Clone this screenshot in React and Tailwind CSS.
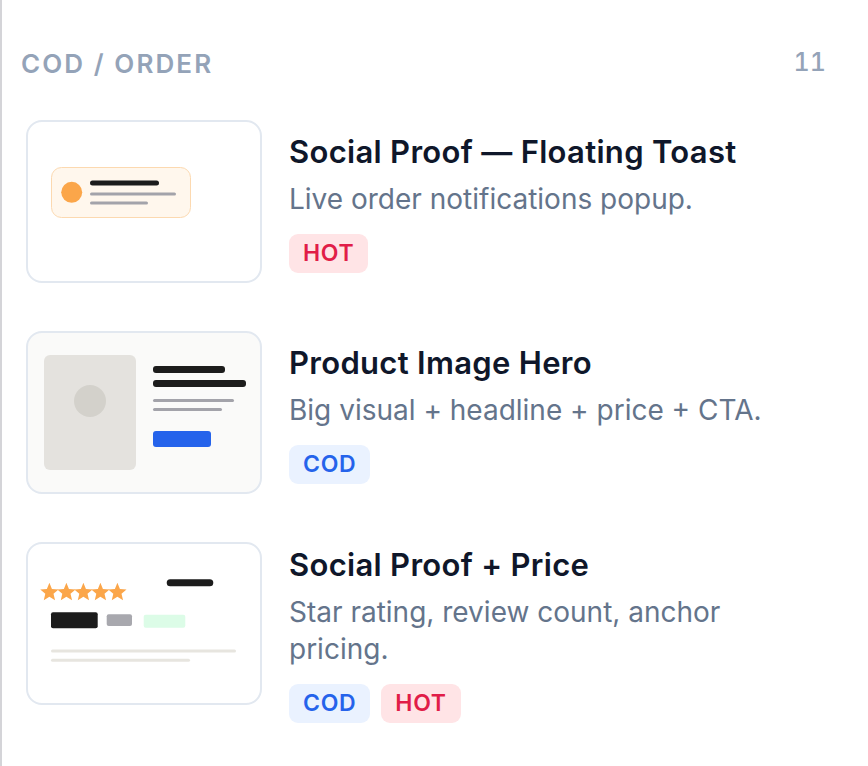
import React from 'react';

const starPoints = (cx, cy, R) => {
  const r = R * 0.45;
  const pts = [];
  for (let i = 0; i < 10; i++) {
    const rad = i % 2 === 0 ? R : r;
    const a = (Math.PI / 5) * i - Math.PI / 2;
    pts.push(`${(cx + rad * Math.cos(a)).toFixed(2)},${(cy + rad * Math.sin(a)).toFixed(2)}`);
  }
  return pts.join(' ');
};

const ToastThumb = () => (
  <svg width="232" height="159" viewBox="2 2 232 159">
    <rect x="25.5" y="47.5" width="139" height="50" rx="10" fill="#fff7ed" stroke="#fcd9b0" />
    <circle cx="45.7" cy="72.3" r="10.5" fill="#fba64a" />
    <rect x="64" y="60.5" width="69" height="5" rx="2.5" fill="#1c1c1c" />
    <rect x="64" y="72.5" width="86" height="3" rx="1.5" fill="#a3a3aa" />
    <rect x="64" y="81.5" width="58" height="3" rx="1.5" fill="#a3a3aa" />
  </svg>
);

const HeroThumb = () => (
  <svg width="232" height="159" viewBox="2 2 232 159">
    <rect x="18" y="24" width="92" height="115" rx="6" fill="#e4e2de" />
    <circle cx="64" cy="70" r="16" fill="#d3d1cb" />
    <rect x="127" y="35" width="72" height="7" rx="3" fill="#1c1c1c" />
    <rect x="127" y="49" width="93" height="7" rx="3" fill="#1c1c1c" />
    <rect x="127" y="68" width="81" height="3" rx="1.5" fill="#a3a3aa" />
    <rect x="127" y="77" width="69" height="3" rx="1.5" fill="#a3a3aa" />
    <rect x="127" y="100" width="58" height="16" rx="3" fill="#2563eb" />
  </svg>
);

const PriceThumb = () => (
  <svg width="232" height="159" viewBox="2 2 232 159">
    {[0, 1, 2, 3, 4].map((i) => (
      <polygon key={i} points={starPoints(23.4 + i * 17, 50.4, 9.6)} fill="#fba64a" />
    ))}
    <rect x="140.7" y="37.3" width="46.6" height="7" rx="3.5" fill="#1c1c1c" />
    <rect x="25" y="70.3" width="46.7" height="16" rx="2" fill="#1c1c1c" />
    <rect x="80.7" y="72.3" width="25.3" height="11.7" rx="2" fill="#a8a8ae" />
    <rect x="117.7" y="72.7" width="41.6" height="13" rx="2" fill="#dcfce7" />
    <rect x="25" y="107.5" width="185" height="3" rx="1.5" fill="#e7e5df" />
    <rect x="25" y="116.8" width="139" height="3" rx="1.5" fill="#e7e5df" />
  </svg>
);

const Badge = ({ kind }) =>
  kind === 'HOT' ? (
    <span className="flex h-[39px] items-center rounded-[9px] bg-[#ffe4e6] px-[14px] text-[23px] font-semibold tracking-[0.03em] text-[#e11d48]">
      HOT
    </span>
  ) : (
    <span className="flex h-[39px] items-center rounded-[9px] bg-[#eaf2ff] px-[14px] text-[23px] font-semibold tracking-[0.03em] text-[#2563eb]">
      COD
    </span>
  );

const items = [
  {
    title: 'Social Proof — Floating Toast',
    desc: 'Live order notifications popup.',
    tags: ['HOT'],
    thumb: <ToastThumb />,
    bg: 'bg-white',
    pad: 'pt-[14px]',
  },
  {
    title: 'Product Image Hero',
    desc: 'Big visual + headline + price + CTA.',
    tags: ['COD'],
    thumb: <HeroThumb />,
    bg: 'bg-[#fafaf9]',
    pad: 'pt-[14px]',
  },
  {
    title: 'Social Proof + Price',
    desc: 'Star rating, review count, anchor pricing.',
    tags: ['COD', 'HOT'],
    thumb: <PriceThumb />,
    bg: 'bg-white',
    pad: 'pt-[5px]',
  },
];

export default function App() {
  return (
    <div className="min-h-screen border-l-2 border-[#d4d4d8] bg-white pl-[19px] pr-[42px] pt-[46px] font-['Inter',sans-serif]">
      <div className="flex h-[34px] items-center justify-between">
        <span className="text-[26px] font-semibold uppercase tracking-[0.08em] text-[#94a3b8]">
          COD / Order
        </span>
        <span className="text-[25px] font-medium tabular-nums text-[#94a3b8]">11</span>
      </div>

      <div className="mt-[40px] flex flex-col gap-[48px] pl-[5px]">
        {items.map((item) => (
          <div key={item.title} className="flex items-start gap-[27px]">
            <div
              className={`h-[163px] w-[236px] shrink-0 overflow-hidden rounded-[16px] border-2 border-[#e2e8f0] ${item.bg}`}
            >
              {item.thumb}
            </div>
            <div className={`w-[510px] ${item.pad}`}>
              <h3 className="text-[31px] font-semibold leading-[36px] tracking-[0.01em] text-[#0f172a]">
                {item.title}
              </h3>
              <p className="mt-[11px] text-[28px] leading-[37px] text-[#64748b]">{item.desc}</p>
              <div className="mt-[16px] flex gap-[11px]">
                {item.tags.map((t) => (
                  <Badge key={t} kind={t} />
                ))}
              </div>
            </div>
          </div>
        ))}
      </div>
    </div>
  );
}
